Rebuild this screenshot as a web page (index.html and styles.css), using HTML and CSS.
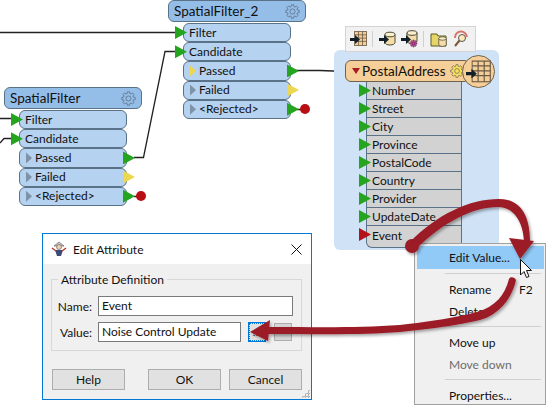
FILE: index.html
```html
<!DOCTYPE html>
<html lang="en">
<head>
<meta charset="utf-8">
<title>Edit Attribute</title>
<link rel="stylesheet" href="styles.css">
</head>
<body>
<svg class="defs" width="0" height="0">
  <symbol id="gear" viewBox="-10 -10 20 20">
    <polygon points="5.77,-1.65 7.9,-1.25 7.9,1.25 5.77,1.65 5.25,2.91 6.47,4.7 4.7,6.47 2.91,5.25 1.65,5.77 1.25,7.9 -1.25,7.9 -1.65,5.77 -2.91,5.25 -4.7,6.47 -6.47,4.7 -5.25,2.91 -5.77,1.65 -7.9,1.25 -7.9,-1.25 -5.77,-1.65 -5.25,-2.91 -6.47,-4.7 -4.7,-6.47 -2.91,-5.25 -1.65,-5.77 -1.25,-7.9 1.25,-7.9 1.65,-5.77 2.91,-5.25 4.7,-6.47 6.47,-4.7 5.25,-2.91"/>
    <circle class="gear-hub" r="3"/>
  </symbol>
  <symbol id="cyl" viewBox="0 0 12 14">
    <path d="M1 3v8c0 1.500 2.200 2.500 5 2.500s5-1 5-2.500V3z" fill="#f6dca6" stroke="#4a4a3a"/>
    <ellipse cx="6" cy="3" rx="5" ry="2.300" fill="#fbeecb" stroke="#4a4a3a"/>
  </symbol>
  <symbol id="table" viewBox="0 0 16 18">
    <rect x=".5" y=".5" width="15" height="17" fill="#f3cf97" stroke="#6b5a45"/>
    <path d="M.5 4.500h15M.5 8.500h15M.5 12.500h15M5.500 .5v17M10.500 .5v17" stroke="#6b5a45" fill="none"/>
  </symbol>
  <symbol id="push" viewBox="0 0 10 9">
    <path d="M0 3h5V0l5 4.500-5 4.500V6H0z" fill="#12202c"/>
  </symbol>
</svg>

<main class="canvas">
  <svg class="wires" width="549" height="408">
    <path d="M0 32.500H176M0 118.500H14M0 143L4 138.500H14M134 157.500H143.500L165 51.500H176M296 70.500H320L346 71.500M134 196.500H141M297 109.500H305"/>
  </svg>

  <section class="node node-filter-1">
    <header class="node-head"><span>SpatialFilter</span><svg class="gear"><use href="#gear"/></svg></header>
    <div class="row"><i class="port in"></i>Filter</div>
    <div class="row"><i class="port in"></i>Candidate</div>
    <div class="row out"><i class="mark"></i>Passed<i class="port go"></i></div>
    <div class="row out"><i class="mark"></i>Failed<i class="port warn"></i></div>
    <div class="row out"><i class="mark"></i>&lt;Rejected&gt;<i class="port go"></i><i class="dot"></i></div>
  </section>

  <section class="node node-filter-2">
    <header class="node-head"><span>SpatialFilter_2</span><svg class="gear"><use href="#gear"/></svg></header>
    <div class="row"><i class="port in"></i>Filter</div>
    <div class="row"><i class="port in"></i>Candidate</div>
    <div class="row out"><i class="mark on"></i>Passed<i class="port go"></i></div>
    <div class="row out"><i class="mark"></i>Failed<i class="port warn"></i></div>
    <div class="row out"><i class="mark"></i>&lt;Rejected&gt;<i class="port go"></i><i class="dot"></i></div>
  </section>

  <div class="selection"></div>

  <nav class="toolbar">
    <svg class="tool" viewBox="0 0 18 18"><use href="#table" x="4" y="1" width="13" height="15"/><use href="#push" x="0" y="5" width="10" height="9"/></svg>
    <b class="tool-sep"></b>
    <svg class="tool" viewBox="0 0 18 18"><use href="#cyl" x="5" y="1" width="12" height="15"/><use href="#push" x="0" y="5" width="10" height="9"/></svg>
    <svg class="tool" viewBox="0 0 18 18"><use href="#cyl" x="5" y="0" width="12" height="14"/><use href="#push" x="0" y="5" width="10" height="9"/><use class="tool-gear" href="#gear" x="8" y="9" width="9" height="9"/></svg>
    <b class="tool-sep"></b>
    <svg class="tool" viewBox="0 0 18 18"><path d="M1 4h6l1 2h8v10H1z" fill="#e6d66a" stroke="#5b5a25"/><use href="#cyl" x="8" y="6" width="9" height="11"/></svg>
    <svg class="tool" viewBox="0 0 18 18"><path d="M3 8a6 6 0 0 1 12-1" fill="none" stroke="#d8746a" stroke-width="2"/><circle cx="10" cy="8" r="3.500" fill="#fbe9b8" stroke="#555"/><path d="M7.500 10.500L3 16" stroke="#7a5a35" stroke-width="2"/></svg>
  </nav>

  <section class="feature">
    <header class="feature-head"><i class="drop"></i><span>PostalAddress</span><svg class="gear sun"><use href="#gear"/></svg></header>
    <div class="attr"><i class="port in"></i>Number</div>
    <div class="attr"><i class="port in"></i>Street</div>
    <div class="attr"><i class="port in"></i>City</div>
    <div class="attr"><i class="port in"></i>Province</div>
    <div class="attr"><i class="port in"></i>PostalCode</div>
    <div class="attr"><i class="port in"></i>Country</div>
    <div class="attr"><i class="port in"></i>Provider</div>
    <div class="attr"><i class="port in"></i>UpdateDate</div>
    <div class="attr last"><i class="port bad"></i>Event</div>
    <div class="badge"><svg class="badge-icon" viewBox="0 0 24 24"><use href="#table" x="5" y="1" width="18" height="21"/><use href="#push" x="0" y="9" width="10" height="9"/></svg></div>
  </section>

  <section class="menu">
    <div class="menu-item active">Edit Value...</div>
    <hr>
    <div class="menu-item">Rename<span class="key">F2</span></div>
    <div class="menu-item">Delete</div>
    <hr>
    <div class="menu-item">Move up</div>
    <div class="menu-item muted">Move down</div>
    <hr>
    <div class="menu-item">Properties...</div>
  </section>

  <section class="dialog">
    <header class="dialog-title">
      <svg class="wizard" viewBox="0 0 16 16"><path d="M3 5h10L8 1z" fill="#c9c9c9" stroke="#555" stroke-width=".6"/><circle cx="8" cy="6" r="2.500" fill="#f2cfa8" stroke="#555" stroke-width=".6"/><path d="M4 9h8l-2 6H6z" fill="#3c4a78"/><path d="M1 7l4 3M15 7l-4 3" stroke="#a33" stroke-width="1.200"/></svg>
      <span class="dialog-name">Edit Attribute</span>
      <svg class="close" viewBox="0 0 11 11"><path d="M.5 .5l10 10M10.500 .5l-10 10"/></svg>
    </header>
    <div class="dialog-body">
      <fieldset class="group">
        <legend>Attribute Definition</legend>
        <div class="field">
          <label>Name:</label>
          <div class="input">Event</div>
        </div>
        <div class="field">
          <label>Value:</label>
          <div class="input">Noise Control Update</div>
          <button class="mini focus">...</button>
          <button class="mini plain"></button>
        </div>
      </fieldset>
      <footer class="actions">
        <button class="btn">Help</button>
        <span class="spacer"></span>
        <button class="btn">OK</button>
        <button class="btn">Cancel</button>
      </footer>
    </div>
    <i class="grip"></i>
  </section>

  <svg class="cursor" viewBox="0 0 12 20"><path d="M.5 .5v15.500l3.500-3.500 2.500 6 2.500-1-2.500-6h5z" fill="#fff" stroke="#111"/></svg>

  <svg class="arrows" width="549" height="408">
    <defs>
      <filter id="shadow" x="-10%" y="-10%" width="125%" height="125%">
        <feDropShadow dx="1.500" dy="2" stdDeviation="1.500" flood-color="#000" flood-opacity=".35"/>
      </filter>
    </defs>
    <g filter="url(#shadow)">
      <circle cx="412" cy="246" r="7"/>
      <path d="M409 243C437 214 470 199 499 199C518 199 530 212 530 241L524 241C523 221 513 207 498 207C473 207 443 222 415 250z"/>
      <path d="M509 238L534 241L520 259z"/>
      <path d="M509 279C505 295 495 307 477 312C455 318 420 323 400 325C360 328 320 327 268 327L268 334C320 334 365 335 400 332C430 329 460 325 480 320C500 314 512 298 516 280C515 277 510 276 509 279z"/>
      <path d="M250 332L270 320L268 341z"/>
    </g>
  </svg>
</main>
</body>
</html>
```
FILE: styles.css
```css
* { box-sizing: border-box; }
html, body { margin: 0; padding: 0; background: #fff; }
body { font-family: Lato, "Liberation Sans", sans-serif; color: #111; }
i { display: block; }
.defs { position: absolute; }

.canvas { position: relative; width: 549px; height: 408px; overflow: hidden; background: #fff; }

.wires { position: absolute; left: 0; top: 0; }
.wires path { fill: none; stroke: #222; stroke-width: 1.3; }

/* transformer nodes */
.node { position: absolute; width: 138px; font-size: 12px; }
.node-filter-1 { left: 4px; top: 87px; }
.node-filter-2 { left: 168px; top: 0; }
.node-head {
  display: flex; align-items: center; justify-content: space-between;
  height: 22px; padding: 0 4px 0 5px; margin-bottom: 1px;
  background: #94bde8; border: 1px solid #5a7288; border-radius: 6px;
  font-size: 13.500px;
}
.gear { width: 17px; height: 17px; fill: none; stroke: #5f7489; stroke-width: 1; }
.gear-hub { fill: none; }
.row {
  position: relative; display: flex; align-items: center;
  width: 108px; height: 19.200px; margin-left: 15px; padding: 0 0 1px 5px;
  background: #b5d2f0; border: 1px solid #5a7288; border-radius: 6px;
}
.row.out { padding-left: 15px; }
.port { position: absolute; width: 12px; height: 13px; clip-path: polygon(0 0, 100% 50%, 0 100%); background: #25a51f; }
.port.in { left: -9px; top: 2px; }
.port.go { left: 103px; top: 2px; }
.port.warn { left: 103px; top: 2px; background: #ecd750; }
.port.bad { left: -8px; top: 2px; background: #b4111a; }
.mark { position: absolute; left: 6px; top: 3px; width: 6px; height: 11px; clip-path: polygon(0 0, 100% 50%, 0 100%); background: #7f93a8; }
.mark.on { background: #ecd750; }
.dot { position: absolute; left: 116px; top: 3.500px; width: 10px; height: 10px; border-radius: 50%; background: #b80e14; }

/* selected feature type */
.selection { position: absolute; left: 334px; top: 50px; width: 165px; height: 200px; background: #cfe2f6; border-radius: 6px; }
.toolbar {
  position: absolute; left: 345px; top: 26px; width: 131px; height: 26px;
  display: flex; align-items: center; padding: 0 0 0 4px;
  background: #f1f1f1; border: 1px solid #d4d4d4;
}
.tool { width: 18px; height: 18px; flex: none; margin-right: 4px; }
.tool-gear { fill: #c2409a; stroke: #55224a; stroke-width: 1; }
.tool-sep { width: 1px; height: 16px; margin: 0 6px 0 0; background: #cfcfcf; }

.feature { position: absolute; left: 345px; top: 60px; width: 117px; font-size: 12px; }
.feature-head {
  position: relative; display: flex; align-items: center;
  width: 125px; height: 22px; padding-left: 6px;
  background: #f5cf97; border: 1px solid #6d6250; border-radius: 6px;
  font-size: 13.500px;
}
.drop { width: 8px; height: 6px; margin-right: 2px; clip-path: polygon(0 0, 100% 0, 50% 100%); background: #a81c22; }
.sun { margin-left: 3px; width: 16px; height: 16px; fill: #fbe15a; stroke: #77705a; }
.attr {
  position: relative; display: flex; align-items: center;
  height: 18px; margin-left: 21px; padding-left: 5px;
  background: #d2d2d2; border: 1px solid #5a7288; border-top: 0;
}
.attr.last { height: 22px; border-bottom-left-radius: 6px; padding-bottom: 3px; }
.attr .port { left: -8px; top: 2px; }
.badge {
  position: absolute; left: 117px; top: -5px; width: 33px; height: 33px;
  display: flex; align-items: center; justify-content: center;
  background: #f5cf97; border: 1px solid #6d6250; border-radius: 50%;
}
.badge-icon { width: 26px; height: 26px; }

/* context menu */
.menu {
  position: absolute; left: 414px; top: 243px; width: 132px; height: 162px;
  padding: 2px 1px 0 2px;
  background: #f0f0f0; border: 1px solid #a0a0a0; font-size: 12px;
}
.menu-item { position: relative; height: 22px; padding-left: 32px; display: flex; align-items: center; color: #111; }
.menu-item.active { height: 23px; background: #91c9f7; }
.menu-item.muted { color: #6d6d6d; }
.key { position: absolute; left: 102px; }
.menu hr { margin: 4px 3px 4px 28px; height: 1px; border: 0; background: #d0d0d0; }

/* dialog */
.dialog {
  position: absolute; left: 42px; top: 233px; width: 270px; height: 167px;
  display: flex; flex-direction: column;
  background: #f0f0f0; border: 1px solid #0078d7; font-size: 12px;
}
.dialog-title { display: flex; align-items: center; height: 30px; padding: 0 9px 0 8px; background: #fff; }
.wizard { width: 16px; height: 16px; margin-right: 6px; }
.dialog-name { flex: 1; font-size: 12px; }
.close { width: 11px; height: 11px; fill: none; stroke: #111; stroke-width: 1; }
.dialog-body { flex: 1; padding: 0 9px 0 8px; }
.group { margin: 8px 0 0; padding: 9px 8px 0 0; height: 79px; border: 1px solid #d8d8d8; }
.group legend { margin-left: 6px; padding: 0 3px; font-size: 12px; }
.field { display: flex; align-items: center; height: 20px; margin-bottom: 6px; }
.field label { width: 40px; margin-right: 6px; text-align: right; }
.input { flex: 1; height: 20px; padding-left: 3px; line-height: 17px; background: #fff; border: 1px solid #7a7a7a; }
.mini { flex: none; height: 18px; padding: 0; background: #d6d6d6; border: 1px solid #adadad; font-size: 11px; line-height: 10px; color: #111; }
.mini.focus { width: 16px; margin-left: 8px; background: #e1e1e1; border: 1px dotted #0078d7; outline: 1px solid #0078d7; }
.mini.plain { width: 18px; margin-left: 9px; margin-right: 1px; }
.actions { display: flex; gap: 8px; margin-top: 18px; padding-left: 1px; }
.spacer { width: 7px; }
.btn { width: 73px; height: 21px; padding: 0; background: #e1e1e1; border: 1px solid #adadad; font: inherit; color: #111; }
.grip {
  position: absolute; right: 1px; bottom: 1px; width: 9px; height: 9px;
  background: radial-gradient(circle, #b5b5b5 1px, transparent 1.100px) 0 0 / 3px 3px;
  clip-path: polygon(100% 0, 100% 100%, 0 100%);
}

.cursor { position: absolute; left: 520px; top: 259px; width: 12px; height: 20px; }
.arrows { position: absolute; left: 0; top: 0; fill: #9b1b26; }
```
